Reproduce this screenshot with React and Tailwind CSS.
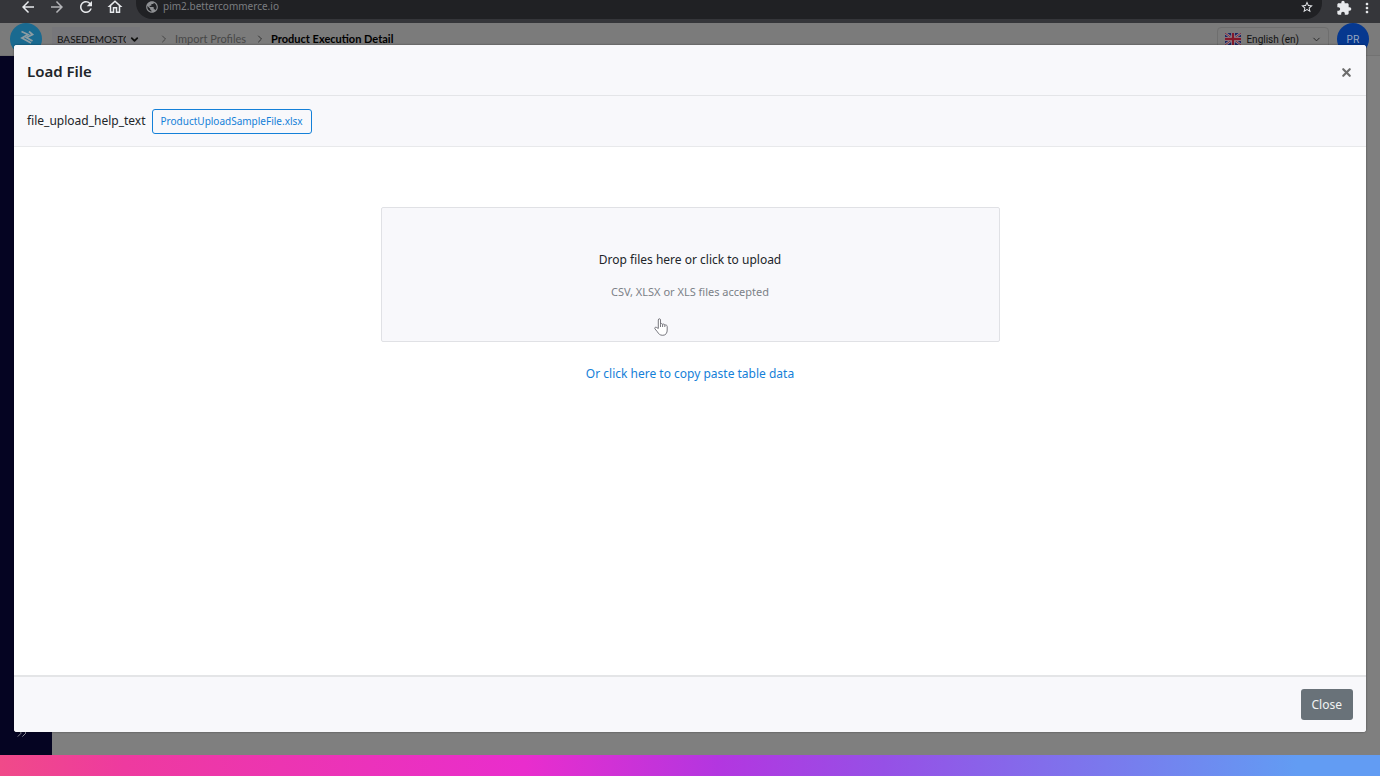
import {
  MdArrowBack,
  MdArrowForward,
  MdExtension,
  MdMoreVert,
  MdOutlineHome,
  MdPublic,
  MdRefresh,
  MdStarBorder,
} from "react-icons/md";
import { ChevronDown, ChevronRight, ChevronsRight, X } from "lucide-react";

const stores = ["BASEDEMOSTORE"];

function BrowserBar() {
  return (
    <div className="flex h-[23px] shrink-0 items-start overflow-hidden bg-[#35363a] pr-[5px] pl-[19px] text-[#e8eaed]">
      <div className="flex w-[117px] shrink-0 gap-[11px]">
        <button aria-label="Back" className="-mt-0.5">
          <MdArrowBack size={18} />
        </button>
        <button aria-label="Forward" className="-mt-0.5 text-[#b4b5b8]">
          <MdArrowForward size={18} />
        </button>
        <button aria-label="Reload" className="-mt-0.5">
          <MdRefresh size={18} />
        </button>
        <button aria-label="Home" className="-mt-0.5">
          <MdOutlineHome size={18} />
        </button>
      </div>
      <div className="flex h-[19px] flex-1 items-start rounded-b-[16px] bg-[#202124] pr-2 pl-[9px]">
        <MdPublic size={14} className="shrink-0 text-[#8e9093]" />
        <span className="ml-1 flex-1 text-[10px] leading-3 text-[#7b7d80]">
          pim2.bettercommerce.io
        </span>
        <button aria-label="Bookmark this page">
          <MdStarBorder size={14} />
        </button>
      </div>
      <button aria-label="Extensions" className="ml-3.5">
        <MdExtension size={16} />
      </button>
      <button aria-label="Menu" className="ml-[7px]">
        <MdMoreVert size={16} />
      </button>
    </div>
  );
}

function Logo() {
  return (
    <svg viewBox="0 0 32 32" className="size-8 shrink-0">
      <circle cx="16" cy="16" r="16" fill="#1a6a90" />
      <g fill="none" stroke="#8d9ca2" strokeWidth="1.8">
        <path d="M11.5 8.5 L18 11.5 L12 15 L21 20" />
        <path d="M19 8.5 L22.5 11.5 L16.5 14.5 L22.5 18" />
      </g>
    </svg>
  );
}

function FlagUK() {
  return (
    <svg viewBox="0 0 60 40" className="h-3 w-4 shrink-0" preserveAspectRatio="none">
      <rect width="60" height="40" fill="#1b2563" />
      <path d="M0 0 L60 40 M60 0 L0 40" stroke="#8c8c94" strokeWidth="9" />
      <path d="M0 0 L60 40 M60 0 L0 40" stroke="#84182a" strokeWidth="3" />
      <path d="M30 0 V40 M0 20 H60" stroke="#8c8c94" strokeWidth="14" />
      <path d="M30 0 V40 M0 20 H60" stroke="#84182a" strokeWidth="8" />
    </svg>
  );
}

function AppHeader() {
  return (
    <header className="flex h-[33px] shrink-0 items-start border-b border-[#727272] bg-[#7b7b7b] pr-[11px] pl-2.5 font-['Lato',sans-serif] text-[#111]">
      <div className="-mb-3 flex w-full items-center">
        <Logo />
        <label className="relative ml-2.5 flex items-center bg-[#77777b]">
          <span className="sr-only">Store</span>
          <select className="h-6 w-[88px] appearance-none overflow-hidden pr-3.5 pl-[5px] text-[10px]">
            {stores.map((s) => (
              <option key={s}>{s}</option>
            ))}
          </select>
          <ChevronDown
            size={11}
            strokeWidth={4}
            className="pointer-events-none absolute right-0"
          />
        </label>
        <nav className="ml-[18px] flex items-center text-[11px]">
          <ChevronRight size={12} className="text-[#444]" />
          <a href="#profiles" className="ml-[5px] text-[#474747]">
            Import Profiles
          </a>
          <ChevronRight size={12} className="ml-2 text-[#333]" />
          <span className="ml-[5px] font-bold text-black">Product Execution Detail</span>
        </nav>
        <button className="ml-auto flex h-6 items-center rounded-sm border border-[#6e6e6e] pr-1.5 pl-[7px] font-['Roboto',sans-serif] text-[10px]">
          <FlagUK />
          <span className="ml-[5px]">English (en)</span>
          <ChevronDown size={11} className="ml-3 text-[#222]" />
        </button>
        <button className="ml-2 size-8 shrink-0 rounded-full bg-[#06388f] font-['Inter',sans-serif] text-[10px] text-[#9ba8c0]">
          PR
        </button>
      </div>
    </header>
  );
}

function LoadFileModal() {
  return (
    <div className="absolute inset-0 flex px-3.5 pt-[22px] pb-[23px]">
      <div
        role="dialog"
        aria-labelledby="load-file-title"
        className="flex flex-1 flex-col overflow-hidden rounded-[3px] bg-white shadow-[0_0_2px_rgba(0,0,0,0.5)]"
      >
        <div className="flex h-[51px] shrink-0 items-center justify-between border-b border-[#e4e5e8] bg-[#f8f8fb] px-[13px] pt-0.5">
          <h1 id="load-file-title" className="text-[15px] font-semibold">
            Load File
          </h1>
          <button aria-label="Close dialog" className="pt-0.5 text-[#6d6d6d]">
            <X size={13} strokeWidth={4} />
          </button>
        </div>

        <div className="flex h-[51px] shrink-0 items-center border-b border-[#e8e9eb] bg-[#f8f8fb] px-[13px]">
          <span className="text-xs">file_upload_help_text</span>
          <a
            href="#sample"
            className="ml-1.5 flex h-[25px] items-center rounded-[3px] border border-[#1480d8] px-2 text-[10px] text-[#1480d8]"
          >
            ProductUploadSampleFile.xlsx
          </a>
        </div>

        <div className="flex flex-1 flex-col items-center pt-[60px]">
          <label
            htmlFor="upload"
            className="relative flex h-[135px] w-full max-w-[619px] cursor-pointer flex-col items-center rounded-xs border border-[#e0e1e5] bg-[#f8f8fb] pt-[42px]"
          >
            <span className="text-xs leading-5">Drop files here or click to upload</span>
            <span className="mt-3 text-[11px] leading-5 text-[#7b8187]">
              CSV, XLSX or XLS files accepted
            </span>
            <input id="upload" type="file" accept=".csv,.xlsx,.xls" className="sr-only" />
            <HandCursor />
          </label>
          <a href="#paste" className="mt-[22px] text-xs leading-5 text-[#1480d8]">
            Or click here to copy paste table data
          </a>
        </div>

        <div className="flex h-[57px] shrink-0 items-center justify-end border-t-2 border-[#e4e5e7] bg-[#f8f8fb] px-[13px]">
          <button className="h-[31px] rounded-[3px] bg-[#697279] px-[11px] text-xs text-[#f1f2f3]">
            Close
          </button>
        </div>
      </div>
    </div>
  );
}

function HandCursor() {
  return (
    <svg
      viewBox="0 0 14 18"
      className="pointer-events-none absolute top-[110px] left-[272px] h-[18px] w-3.5"
      fill="#fff"
      stroke="#77777e"
      strokeLinejoin="round"
    >
      <path d="M4.3 10.5 V2 C4.3 .3 6.5 .3 6.5 2 V6.2 C7 5.2 8.6 5.5 8.6 6.5 C9.2 5.7 10.8 6 10.8 7.2 C11.5 6.6 13.2 7 13.2 8.5 V12 C13.2 14.8 12 17.3 8.8 17.3 C5.6 17.3 4.7 15.8 3.4 13.8 L.9 10.8 C.2 9.6 1.7 8.7 2.7 9.5 Z" />
      <path d="M6.5 6.2 V9 M8.6 6.5 V9 M10.8 7.2 V9" />
    </svg>
  );
}

export default function App() {
  return (
    <div className="flex h-screen flex-col overflow-hidden bg-[#7f7f7f] font-['Noto_Sans',sans-serif] text-[#212529]">
      <BrowserBar />
      <div className="relative flex min-h-0 flex-1 flex-col">
        <AppHeader />
        <div className="flex flex-1">
          <aside className="flex w-[52px] flex-col justify-end bg-[#050422] pb-3.5 pl-3.5">
            <button aria-label="Expand menu" className="text-[#85858f]">
              <ChevronsRight size={16} strokeWidth={1.5} />
            </button>
          </aside>
          <main className="flex-1 bg-[#7f7f7f]" />
        </div>
        <LoadFileModal />
      </div>
      <div className="h-[21px] shrink-0 bg-[linear-gradient(to_right,#f04a89,#ee3a9f_9%,#e92dcd_38%,#b336e0_52%,#9650e6_64%,#629cf3_94%)]" />
    </div>
  );
}
